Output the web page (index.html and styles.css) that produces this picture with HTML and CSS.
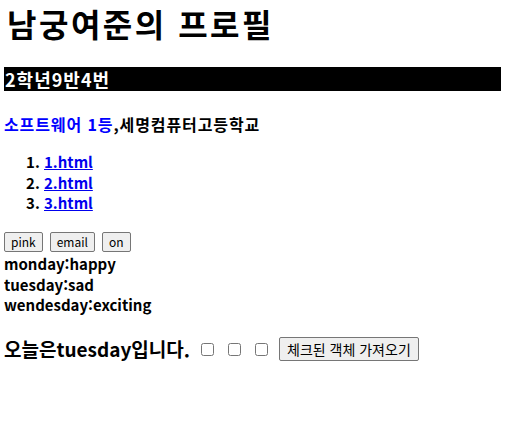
FILE: index.html
```html
<!DOCTYPE html>
<html lang="ko">
<head>
<meta charset="utf-8">
<title>남궁여준의 프로필</title>
<link rel="stylesheet" href="styles.css">
</head>
<body>
<h1 class="title">남궁여준의 프로필</h1>
<h3 class="bar">2학년9반4번</h3>
<p class="award"><span class="blue">소프트웨어 1등</span>,세명컴퓨터고등학교</p>
<ol class="links">
  <li><a href="#">1.html</a></li>
  <li><a href="#">2.html</a></li>
  <li><a href="#">3.html</a></li>
</ol>
<div class="buttons">
  <button class="btn">pink</button>
  <button class="btn">email</button>
  <button class="btn">on</button>
</div>
<div class="days">
  <div>monday:happy</div>
  <div>tuesday:sad</div>
  <div>wendesday:exciting</div>
</div>
<div class="today">
  <span class="today-text">오늘은tuesday입니다.</span>
  <input type="checkbox" class="chk"> <input type="checkbox" class="chk"> <input type="checkbox" class="chk">
  <button class="btn btn-get">체크된 객체 가져오기</button>
</div>
</body>
</html>
```
FILE: styles.css
```css
body {
  margin: 0 4px;
  font-family: "Noto Sans CJK KR", "Noto Sans", sans-serif;
  color: #000;
  background: #fff;
}
.title {
  margin: 4px 0 0 0;
  padding-left: 3px;
  font-size: 32px;
  line-height: 38px;
  font-weight: 700;
  letter-spacing: 2.5px;
}
.bar {
  margin: 25px -4px 0 0;
  background: #000;
  color: #fff;
  font-size: 18px;
  line-height: 24px;
  height: 24px;
  font-weight: 700;
  padding-left: 1px;
  letter-spacing: 1px;
}
.award {
  margin: 23px 0 0 0;
  font-size: 16px;
  line-height: 20px;
  font-weight: 700;
  letter-spacing: 0.9px;
}
.blue { color: #0000ff; }
.links {
  margin: 18px 0 0 0;
  padding-left: 40px;
  font-size: 15px;
  line-height: 20.5px;
  font-weight: 700;
}
.links a { color: #0000ee; }
.buttons {
  margin-top: 18.5px;
  display: flex;
  gap: 7px;
  height: 20px;
}
.btn {
  font-family: "Noto Sans CJK KR", "Noto Sans", sans-serif;
  font-size: 12px;
  line-height: 16px;
  height: 20px;
  padding: 0 6px;
  margin: 0;
  background: #efefef;
  border: 1px solid #767676;
  border-radius: 2px;
  color: #000;
}
.days {
  margin-top: 2px;
  font-size: 15px;
  line-height: 20.5px;
  font-weight: 700;
}
.today {
  margin-top: 18.5px;
  height: 30px;
  display: flex;
  align-items: center;
}
.today-text {
  font-size: 19px;
  font-weight: 700;
  line-height: 30px;
  margin-right: 11px;
}
.chk {
  width: 13px;
  height: 13px;
  margin: 0 14px 0 0;
}
.btn-get {
  height: 24px;
  padding: 0 7px;
  font-size: 14px;
  margin-left: -3px;
}
```
